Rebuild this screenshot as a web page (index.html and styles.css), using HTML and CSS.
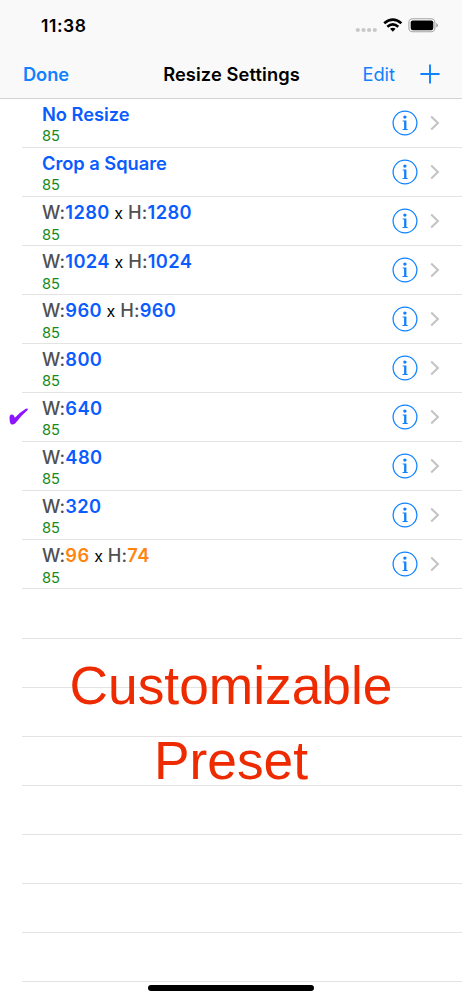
FILE: index.html
```html
<!DOCTYPE html>
<html lang="en">
<head>
<meta charset="utf-8">
<title>Resize Settings</title>
<link rel="stylesheet" href="styles.css">
</head>
<body>
<svg class="defs" width="0" height="0" aria-hidden="true">
  <symbol id="info" viewBox="0 0 26 26"><circle cx="13" cy="13" r="11.9" fill="none" stroke="#1082ff" stroke-width="1.25"/><circle cx="12.9" cy="7.1" r="1.7" fill="#1082ff"/><path d="M10.7 10.5h3.7v8.5h1.3v1h-5.1v-1h1.5v-7.5h-1.4z" fill="#1082ff"/></symbol>
  <symbol id="chevron" viewBox="0 0 10 16"><path d="M1.2 1.6 7.9 8l-6.7 6.4" fill="none" stroke="#c4c4c8" stroke-width="2.1"/></symbol>
</svg>
<div class="screen">
  <header class="top">
    <div class="status">
      <span class="time">11:38</span>
      <svg class="indicators" width="84" height="16" viewBox="0 0 84 16">
        <g fill="#c8c8c8"><circle cx="2.8" cy="12" r="2.1"/><circle cx="8.5" cy="12" r="2.1"/><circle cx="14.1" cy="12" r="2.1"/><circle cx="19.8" cy="12" r="2.1"/></g>
        <g fill="none" stroke="#000" stroke-width="2.6"><path d="M29.2 5.3Q37.8-1.9 46.4 5.3"/><path d="M32.3 8.7q5.5-4.6 11 0"/></g>
        <path d="M35 10.7q2.8-2 5.6 0L37.8 13.8z"/>
        <rect x="53.9" y=".8" width="26" height="13" rx="3.8" fill="none" stroke="#a5a5a5" stroke-width="1.1"/>
        <rect x="55.7" y="2.4" width="22.6" height="9.8" rx="2.2"/>
        <path d="M81.2 5v4.6q1.8-.7 1.8-2.3T81.2 5" fill="#a5a5a5"/>
      </svg>
    </div>
    <nav class="nav">
      <span class="done">Done</span>
      <span class="title">Resize Settings</span>
      <span class="actions"><span class="edit">Edit</span><svg class="plus" width="20" height="20" viewBox="0 0 20 20"><path d="M10 .4v19.2M.4 10h19.2" stroke="#1082ff" stroke-width="1.9"/></svg></span>
    </nav>
  </header>
  <main class="list">
    <div class="row"><div class="label"><p class="name"><b class="word">No Resize</b></p><p class="quality">85</p></div><svg class="info"><use href="#info"/></svg><svg class="chevron"><use href="#chevron"/></svg></div>
    <div class="row"><div class="label"><p class="name"><b class="word">Crop a Square</b></p><p class="quality">85</p></div><svg class="info"><use href="#info"/></svg><svg class="chevron"><use href="#chevron"/></svg></div>
    <div class="row"><div class="label"><p class="name">W:<b>1280</b><i> x </i>H:<b>1280</b></p><p class="quality">85</p></div><svg class="info"><use href="#info"/></svg><svg class="chevron"><use href="#chevron"/></svg></div>
    <div class="row"><div class="label"><p class="name">W:<b>1024</b><i> x </i>H:<b>1024</b></p><p class="quality">85</p></div><svg class="info"><use href="#info"/></svg><svg class="chevron"><use href="#chevron"/></svg></div>
    <div class="row"><div class="label"><p class="name">W:<b>960</b><i> x </i>H:<b>960</b></p><p class="quality">85</p></div><svg class="info"><use href="#info"/></svg><svg class="chevron"><use href="#chevron"/></svg></div>
    <div class="row"><div class="label"><p class="name">W:<b>800</b></p><p class="quality">85</p></div><svg class="info"><use href="#info"/></svg><svg class="chevron"><use href="#chevron"/></svg></div>
    <div class="row"><svg class="check" width="20" height="18" viewBox="0 0 20 18"><path d="M.7 7.9Q2.2 5.5 4.6 7.2L5.9 9.8Q11 4.200 16.800.8q2.200-.9 2.100 1Q12.400 7.400 7 14.600 4.600 17.700 1.800 15.900.1 14.200.7 7.9" fill="#8c14ff"/></svg><div class="label"><p class="name">W:<b>640</b></p><p class="quality">85</p></div><svg class="info"><use href="#info"/></svg><svg class="chevron"><use href="#chevron"/></svg></div>
    <div class="row"><div class="label"><p class="name">W:<b>480</b></p><p class="quality">85</p></div><svg class="info"><use href="#info"/></svg><svg class="chevron"><use href="#chevron"/></svg></div>
    <div class="row"><div class="label"><p class="name">W:<b>320</b></p><p class="quality">85</p></div><svg class="info"><use href="#info"/></svg><svg class="chevron"><use href="#chevron"/></svg></div>
    <div class="row"><div class="label"><p class="name">W:<b class="custom">96</b><i> x </i>H:<b class="custom">74</b></p><p class="quality">85</p></div><svg class="info"><use href="#info"/></svg><svg class="chevron"><use href="#chevron"/></svg></div>
    <div class="row"></div><div class="row"></div><div class="row"></div><div class="row"></div>
    <div class="row"></div><div class="row"></div><div class="row"></div><div class="row"></div>
  </main>
  <p class="caption">Customizable<br>Preset</p>
  <div class="home"></div>
</div>
</body>
</html>
```
FILE: styles.css
```css
* { box-sizing: border-box; }
body { margin: 0; background: #fff; }
p { margin: 0; }
svg { display: block; flex: none; }
.defs { position: absolute; }
.screen {
  position: relative;
  width: 462px;
  height: 1000px;
  overflow: hidden;
  font-family: Inter, "Liberation Sans", sans-serif;
}
.top { height: 99px; background: #f9f9f9; border-bottom: 1px solid #d3d3d3; }
.status { display: flex; justify-content: space-between; height: 50px; padding: 13px 23px 0 41px; }
.time { font-size: 17.5px; line-height: 25px; font-weight: 600; letter-spacing: .55px; }
.indicators { margin-top: 5px; }
.nav {
  display: grid;
  grid-template-columns: 1fr auto 1fr;
  align-items: center;
  height: 47px;
  padding: 0 22px 0 23px;
  font-size: 18.3px;
  line-height: 24px;
}
.done { color: #1082ff; font-weight: 600; letter-spacing: -.1px; }
.title { font-weight: 600; letter-spacing: .1px; }
.actions { display: flex; justify-content: flex-end; align-items: center; gap: 25px; color: #1082ff; }
.row { display: flex; position: relative; height: 49.06px; padding-left: 42px; padding-right: 22px; }
.row::after { content: ""; position: absolute; left: 22px; right: 0; bottom: 0; height: 1px; background: #e3e3e4; }
.label { flex: 1; padding-top: 3px; }
.name { font-size: 18.3px; line-height: 24px; font-weight: 500; letter-spacing: .2px; color: #505050; white-space: pre; }
.name b { font-weight: 600; letter-spacing: .35px; color: #0a5cff; }
.name .word { letter-spacing: -.03px; }
.name .custom { color: #ff850f; }
.name i { font-style: normal; font-size: 16px; font-weight: 400; color: #000; }
.quality { font-size: 14.7px; line-height: 20px; color: #178a17; }
.info { width: 26px; height: 26px; margin: 11px 12px 0 0; }
.chevron { width: 10px; height: 16px; margin-top: 16px; }
.check { position: absolute; left: 9px; top: 15px; }
.caption {
  position: absolute;
  left: 0;
  right: 0;
  top: 649px;
  text-align: center;
  font: 53.3px/74.5px "Liberation Sans", Arial, sans-serif;
  color: #ee2a00;
}
.home { position: absolute; left: 148px; top: 985px; width: 166px; height: 6px; border-radius: 3px; background: #000; }
```
